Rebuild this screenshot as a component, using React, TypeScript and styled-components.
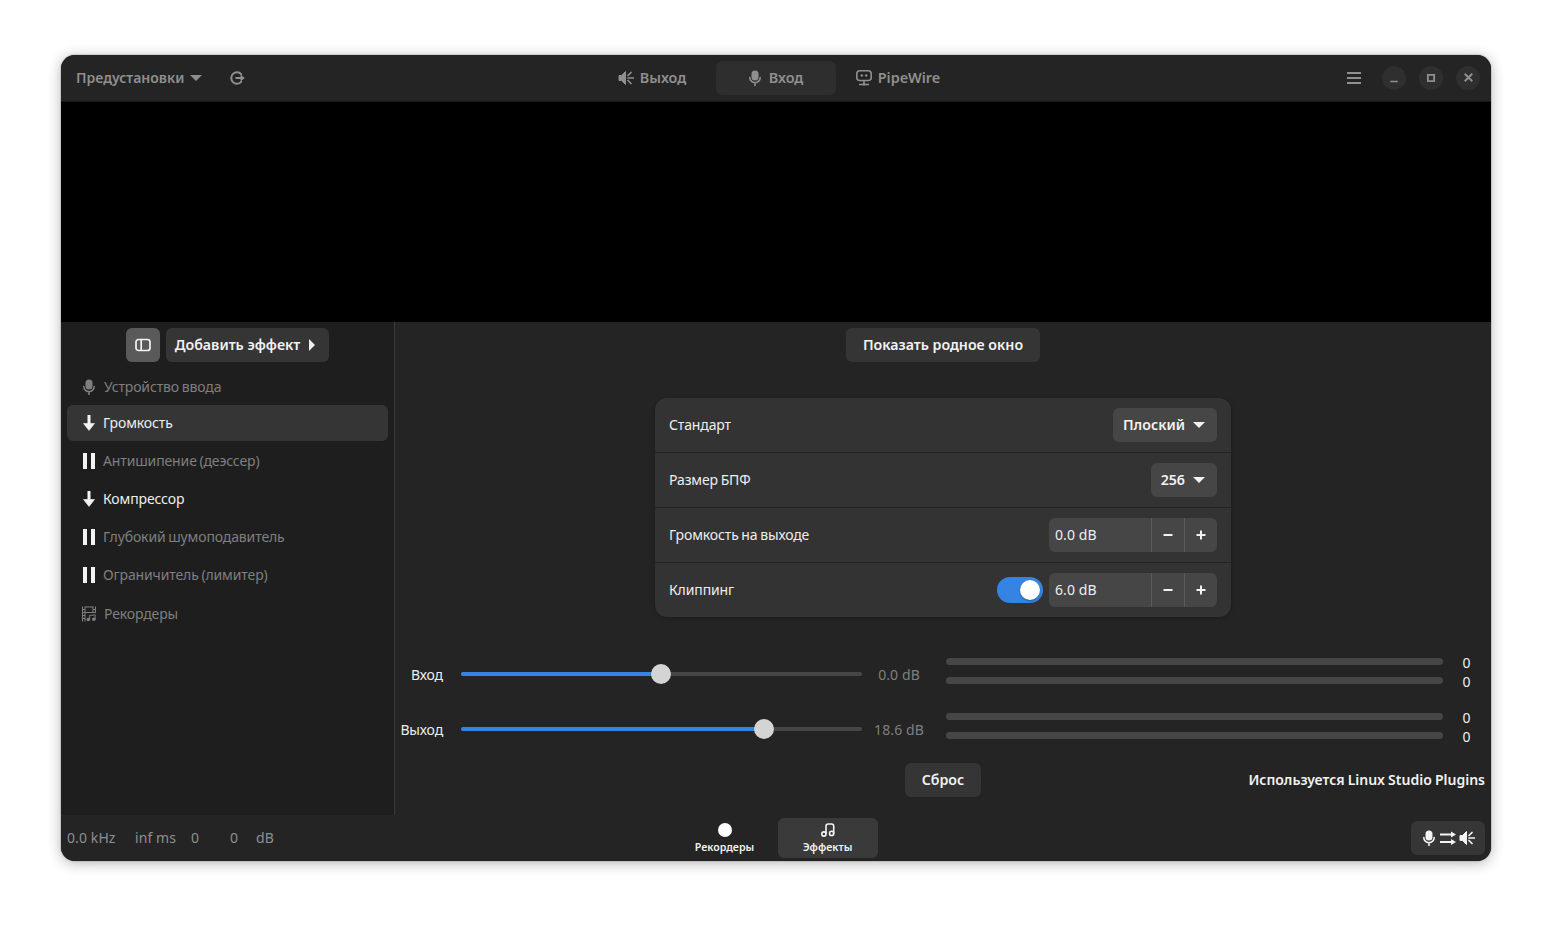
import React from 'react';
import styled, { createGlobalStyle } from 'styled-components';

const GlobalStyle = createGlobalStyle`
  html, body {
    margin: 0;
    height: 100%;
    background: #ffffff;
  }
  body {
    font-family: "Noto Sans", "Open Sans", sans-serif;
    font-size: 14px;
    line-height: 18px;
    letter-spacing: -0.13px;
    word-spacing: -0.8px;
    color: #eeeeee;
  }
  svg {
    flex: none;
  }
`;

const Page = styled.div`
  width: 1552px;
  height: 928px;
  padding: 55px 61px 67px;
  box-sizing: border-box;
  overflow: hidden;
`;

const Window = styled.div`
  height: 806px;
  display: flex;
  flex-direction: column;
  background: #242424;
  border-radius: 14px;
  overflow: hidden;
  box-shadow: 0 2px 14px rgba(0, 0, 0, 0.3), 0 0 0 1px rgba(0, 0, 0, 0.1);
`;

const HeaderBar = styled.header`
  flex: none;
  height: 47px;
  box-sizing: border-box;
  display: grid;
  grid-template-columns: 1fr auto 1fr;
  align-items: center;
  padding: 0 6px 1px;
  background: #242424;
  border-bottom: 1px solid #161616;
  color: #8f8f8f;
  font-size: 14.4px;
  font-weight: 600;
  letter-spacing: 0;
  word-spacing: 0;
`;

const HeaderLeft = styled.div`
  display: flex;
  align-items: center;
`;

const PresetMenu = styled.div`
  display: flex;
  align-items: center;
  gap: 6px;
  padding-left: 9px;
  width: 136px;
  box-sizing: border-box;
  font-size: 14px;
`;

const LoadButton = styled.span`
  display: flex;
  margin-left: 26px;
`;

const Caret = styled.span<{ $color?: string }>`
  width: 0;
  height: 0;
  border-left: 6px solid transparent;
  border-right: 6px solid transparent;
  border-top: 6px solid ${p => p.$color || '#8f8f8f'};
`;

const RightCaret = styled.span`
  width: 0;
  height: 0;
  border-top: 6px solid transparent;
  border-bottom: 6px solid transparent;
  border-left: 6px solid #eeeeee;
`;

const ViewSwitcher = styled.nav`
  display: flex;
  gap: 3px;
`;

const ViewTab = styled.div<{ $active?: boolean }>`
  width: 120px;
  height: 34px;
  box-sizing: border-box;
  padding-right: 2px;
  display: flex;
  align-items: center;
  justify-content: center;
  gap: 6px;
  border-radius: 6px;
  background: ${p => (p.$active ? '#2e2e2e' : 'transparent')};
`;

const HeaderRight = styled.div`
  display: flex;
  align-items: center;
  justify-content: flex-end;
  gap: 13px;
  padding-right: 5px;
`;

const Hamburger = styled.div`
  margin-right: 7px;
  display: flex;
`;

const WindowButton = styled.div`
  width: 24px;
  height: 24px;
  border-radius: 50%;
  background: #2f2f2f;
  display: flex;
  align-items: center;
  justify-content: center;
`;

const Spectrum = styled.div`
  flex: none;
  height: 220px;
  background: #000000;
`;

const Content = styled.div`
  flex: 1;
  min-height: 0;
  display: flex;
`;

const Sidebar = styled.aside`
  flex: none;
  width: 334px;
  box-sizing: border-box;
  background: #1e1e1e;
  border-right: 1px solid #3a3a3a;
  padding: 0 6px;
  display: flex;
  flex-direction: column;
`;

const SidebarTools = styled.div`
  display: flex;
  justify-content: center;
  gap: 6px;
  padding: 6px 0 7px;
`;

const ToggleButton = styled.div`
  width: 34px;
  height: 34px;
  border-radius: 6px;
  background: #5a5a5a;
  display: flex;
  align-items: center;
  justify-content: center;
`;

const Button = styled.div<{ $width?: number }>`
  height: 34px;
  box-sizing: border-box;
  border-radius: 6px;
  background: #353535;
  display: inline-flex;
  align-items: center;
  justify-content: center;
  gap: 9px;
  font-size: 14.2px;
  font-weight: 600;
  letter-spacing: 0;
  word-spacing: 0;
  color: #f2f2f2;
  width: ${p => (p.$width ? `${p.$width}px` : 'auto')};
`;

const AddButton = styled(Button)`
  padding-right: 5px;
`;

const EffectList = styled.div`
  display: flex;
  flex-direction: column;
  gap: 2px;
`;

const Row = styled.div<{ $selected?: boolean; $dim?: boolean; $gap?: number }>`
  height: 36px;
  display: flex;
  align-items: center;
  gap: ${p => p.$gap || 8}px;
  padding-left: 16px;
  border-radius: 6px;
  background: ${p => (p.$selected ? '#353535' : 'transparent')};
  color: ${p => (p.$dim ? '#7f7f7f' : '#eeeeee')};
`;

const RecorderRow = styled(Row)`
  margin-top: 3px;
`;

const RowIcon = styled.span`
  width: 12px;
  display: flex;
  justify-content: center;
  flex: none;
`;

const Pause = styled.span`
  width: 12px;
  height: 16px;
  box-sizing: border-box;
  border-left: 4px solid #f4f4f4;
  border-right: 4px solid #f4f4f4;
`;

const Main = styled.main`
  flex: 1;
  min-width: 0;
  display: flex;
  flex-direction: column;
  align-items: center;
  padding-top: 6px;
`;

const Card = styled.section`
  width: 576px;
  margin-top: 36px;
  border-radius: 12px;
  background: #333333;
  box-shadow: 0 1px 4px rgba(0, 0, 0, 0.25);
  overflow: hidden;
`;

const CardRow = styled.div`
  height: 54px;
  box-sizing: border-box;
  display: flex;
  align-items: center;
  justify-content: space-between;
  padding: 0 14px;
  & + & {
    height: 55px;
    border-top: 1px solid #232323;
  }
`;

const CardValue = styled.div`
  display: flex;
  align-items: center;
  gap: 6px;
`;

const Combo = styled(Button)`
  background: #464646;
  padding: 0 12px 0 10px;
  gap: 8px;
`;

const Spin = styled.div`
  width: 168px;
  height: 34px;
  border-radius: 6px;
  background: #464646;
  display: flex;
  align-items: stretch;
`;

const SpinText = styled.div`
  flex: 1;
  display: flex;
  align-items: center;
  padding-left: 6px;
  letter-spacing: 0.1px;
  word-spacing: 0;
`;

const SpinButton = styled.div`
  width: 33px;
  box-sizing: border-box;
  display: flex;
  align-items: center;
  justify-content: center;
  border-left: 1px solid #5a5a5a;
`;

const Switch = styled.div`
  width: 46px;
  height: 26px;
  box-sizing: border-box;
  border-radius: 13px;
  background: #3584e4;
  display: flex;
  justify-content: flex-end;
  align-items: center;
  padding-right: 3px;
`;

const Knob = styled.div`
  width: 20px;
  height: 20px;
  border-radius: 50%;
  background: #ffffff;
  box-shadow: 0 1px 2px rgba(0, 0, 0, 0.3);
`;

const Levels = styled.div`
  align-self: stretch;
  margin-top: 38px;
  display: flex;
  flex-direction: column;
  gap: 17px;
`;

const LevelRow = styled.div`
  height: 38px;
  display: flex;
  align-items: center;
`;

const LevelLabel = styled.div`
  width: 48px;
  margin-right: 18px;
  padding-top: 2px;
  text-align: right;
  white-space: nowrap;
`;

const Slider = styled.div`
  position: relative;
  width: 401px;
  height: 4px;
  border-radius: 2px;
  background: #464646;
`;

const SliderFill = styled.div`
  height: 100%;
  border-radius: 2px;
  background: #3584e4;
`;

const Thumb = styled.div`
  position: absolute;
  top: -8px;
  width: 20px;
  height: 20px;
  margin-left: -10px;
  border-radius: 50%;
  background: #d4d4d4;
`;

const LevelValue = styled.div`
  width: 60px;
  margin: 0 17px 0 7px;
  padding-top: 2px;
  text-align: center;
  color: #7f7f7f;
  white-space: nowrap;
  letter-spacing: 0.1px;
  word-spacing: 0;
`;

const Meters = styled.div`
  width: 497px;
  align-self: flex-start;
  margin-top: 3px;
  display: flex;
  flex-direction: column;
  gap: 12px;
`;

const Meter = styled.div`
  height: 7px;
  border-radius: 4px;
  background: #464646;
`;

const MeterNumbers = styled.div`
  width: 47px;
  align-self: flex-start;
  margin-top: -2px;
  display: flex;
  flex-direction: column;
  align-items: center;
  line-height: 19px;
`;

const Footer = styled.div`
  align-self: stretch;
  margin-top: 15px;
  padding: 0 6px;
  display: grid;
  grid-template-columns: 1fr auto 1fr;
  align-items: center;
`;

const Credit = styled.div`
  font-weight: 600;
  letter-spacing: 0;
  word-spacing: -0.5px;
  color: #f2f2f2;
  justify-self: end;
  white-space: nowrap;
`;

const BottomBar = styled.footer`
  flex: none;
  height: 46px;
  display: grid;
  grid-template-columns: 1fr auto 1fr;
  align-items: center;
  padding: 0 6px;
  background: #242424;
`;

const Stats = styled.div`
  display: flex;
  color: #8f8f8f;
  letter-spacing: 0.1px;
  word-spacing: 0;
`;

const Stat = styled.span<{ $width: number }>`
  width: ${p => p.$width}px;
  white-space: nowrap;
`;

const BottomNav = styled.nav`
  display: flex;
  gap: 3px;
`;

const NavItem = styled.div<{ $active?: boolean }>`
  width: 100px;
  height: 40px;
  border-radius: 6px;
  display: flex;
  flex-direction: column;
  align-items: center;
  justify-content: center;
  gap: 3px;
  font-size: 10.6px;
  font-weight: 600;
  line-height: 14px;
  letter-spacing: 0;
  color: #f2f2f2;
  background: ${p => (p.$active ? '#3a3a3a' : 'transparent')};
`;

const RecordDot = styled.span`
  width: 14px;
  height: 14px;
  border-radius: 50%;
  background: #ffffff;
`;

const RouteButton = styled(Button)`
  justify-self: end;
  width: 74px;
  gap: 3px;
  background: #363636;
`;

const Mic = ({ color, size = 16 }: { color: string; size?: number }) => (
  <svg width={size} height={size} viewBox="0 0 16 16" fill="none">
    <rect x="4.5" y="0.5" width="7" height="10" rx="3.5" fill={color} />
    <path d="M2.8 7.5a5.2 5.2 0 0 0 10.4 0M8 12.5V15.5" stroke={color} strokeWidth="1.6" strokeLinecap="round" />
  </svg>
);

const Speaker = ({ color }: { color: string }) => (
  <svg width="16" height="16" viewBox="0 0 16 16" fill="none">
    <path d="M7.5 1.5v13L3.5 10.5H1v-5H3.5z" fill={color} stroke={color} strokeLinejoin="round" />
    <path d="M10 5.5L13 2.5M10 8H15.5M10 10.5L13 13.5" stroke={color} strokeWidth="1.7" strokeLinecap="round" />
  </svg>
);

const PipeWireIcon = () => (
  <svg width="16" height="16" viewBox="0 0 16 16" fill="none">
    <rect x="0.8" y="0.8" width="14.4" height="9.7" rx="3" stroke="#8f8f8f" strokeWidth="1.6" />
    <circle cx="5.8" cy="5.5" r="1.2" fill="#8f8f8f" />
    <circle cx="10.2" cy="5.5" r="1.2" fill="#8f8f8f" />
    <path d="M8 10.5V14M3 14.5H13" stroke="#8f8f8f" strokeWidth="1.6" />
    <circle cx="8" cy="14.3" r="1.4" fill="#8f8f8f" />
  </svg>
);

const LoadIcon = () => (
  <svg width="16" height="16" viewBox="0 0 16 16" fill="none">
    <path d="M12.2 4.2A5.7 5.7 0 1 0 12.2 11.8" stroke="#8f8f8f" strokeWidth="2" strokeLinecap="round" />
    <path d="M6.5 8H14" stroke="#8f8f8f" strokeWidth="2" />
    <path d="M11.5 4.6L15.8 8 11.5 11.4z" fill="#8f8f8f" />
  </svg>
);

const SidebarIcon = () => (
  <svg width="16" height="16" viewBox="0 0 16 16" fill="none">
    <rect x="1" y="2.5" width="14" height="11" rx="2.5" stroke="#f4f4f4" strokeWidth="1.7" />
    <path d="M6.2 3V13" stroke="#f4f4f4" strokeWidth="1.7" />
  </svg>
);

const ArrowDown = () => (
  <svg width="12" height="16" viewBox="0 0 12 16" fill="none">
    <path d="M6 0.5V12" stroke="#f4f4f4" strokeWidth="3" strokeLinecap="round" />
    <path d="M0.5 8.5H11.5L6 15.5z" fill="#f4f4f4" stroke="#f4f4f4" strokeWidth="0.6" strokeLinejoin="round" />
  </svg>
);

const RecorderIcon = () => (
  <svg width="16" height="16" viewBox="0 0 16 16" fill="none">
    <path d="M1.5 0.5v15M14.5 0.5v6M4 0.5v15M1 3.5H4M1 6.5H4M1 9.5H4M1 12.5H4M12 0.5v6M12 3.5H15M12 6.5H15M4 1H12M4 6.5H12" stroke="#7f7f7f" strokeWidth="1" />
    <circle cx="7.3" cy="13.5" r="1.8" fill="#7f7f7f" />
    <circle cx="12.8" cy="13.2" r="1.8" fill="#7f7f7f" />
    <path d="M8.6 13.5V9.5L14.1 8.8V13.2" stroke="#7f7f7f" strokeWidth="1" />
  </svg>
);

const MusicIcon = () => (
  <svg width="14" height="14" viewBox="0 0 14 14" fill="none">
    <circle cx="2.9" cy="11" r="2.1" stroke="#f4f4f4" strokeWidth="1.6" />
    <circle cx="10.6" cy="10.4" r="2.1" stroke="#f4f4f4" strokeWidth="1.6" />
    <path d="M5 11V3.2Q5 1 7.2 1H10.5Q12.7 1 12.7 3.2V10.4" stroke="#f4f4f4" strokeWidth="1.6" />
  </svg>
);

const RouteArrows = () => (
  <svg width="16" height="16" viewBox="0 0 16 16" fill="none">
    <path d="M0 4.5H13M0 12H13" stroke="#f4f4f4" strokeWidth="2" />
    <path d="M11 1.5L16 4.5 11 7.5zM11 9L16 12 11 15z" fill="#f4f4f4" />
  </svg>
);

const Stroke = ({ d, size = 16, color = '#8f8f8f', width = 2 }: { d: string; size?: number; color?: string; width?: number }) => (
  <svg width={size} height={size} viewBox="0 0 16 16" fill="none">
    <path d={d} stroke={color} strokeWidth={width} />
  </svg>
);

const Stepper = ({ value }: { value: string }) => (
  <Spin>
    <SpinText>{value}</SpinText>
    <SpinButton><Stroke size={12} d="M2 8H14" color="#f2f2f2" width={2.6} /></SpinButton>
    <SpinButton><Stroke size={12} d="M2 8H14M8 2V14" color="#f2f2f2" width={2.6} /></SpinButton>
  </Spin>
);

const Level = ({ label, value, percent }: { label: string; value: string; percent: number }) => (
  <LevelRow>
    <LevelLabel>{label}</LevelLabel>
    <Slider>
      <SliderFill style={{ width: `${percent}%` }} />
      <Thumb style={{ left: `${percent}%` }} />
    </Slider>
    <LevelValue>{value}</LevelValue>
    <Meters>
      <Meter />
      <Meter />
    </Meters>
    <MeterNumbers>
      <span>0</span>
      <span>0</span>
    </MeterNumbers>
  </LevelRow>
);

const App = () => {
  return (
    <Page>
      <GlobalStyle />
      <Window>
        <HeaderBar>
          <HeaderLeft>
            <PresetMenu>
              Предустановки <Caret />
            </PresetMenu>
            <LoadButton><LoadIcon /></LoadButton>
          </HeaderLeft>
          <ViewSwitcher>
            <ViewTab><Speaker color="#8f8f8f" />Выход</ViewTab>
            <ViewTab $active><Mic color="#8f8f8f" />Вход</ViewTab>
            <ViewTab><PipeWireIcon />PipeWire</ViewTab>
          </ViewSwitcher>
          <HeaderRight>
            <Hamburger><Stroke d="M1 3H15M1 8H15M1 13H15" /></Hamburger>
            <WindowButton><Stroke size={12} d="M3 12.5H13" width={2} /></WindowButton>
            <WindowButton><Stroke size={10} d="M3 3H13V13H3Z" width={3} /></WindowButton>
            <WindowButton><Stroke size={11} d="M2.5 2.5L13.5 13.5M13.5 2.5L2.5 13.5" width={2.8} /></WindowButton>
          </HeaderRight>
        </HeaderBar>
        <Spectrum />
        <Content>
          <Sidebar>
            <SidebarTools>
              <ToggleButton><SidebarIcon /></ToggleButton>
              <AddButton $width={163}>Добавить эффект <RightCaret /></AddButton>
            </SidebarTools>
            <Row $dim $gap={9}><RowIcon><Mic color="#7f7f7f" /></RowIcon>Устройство ввода</Row>
            <EffectList>
              <Row $selected><RowIcon><ArrowDown /></RowIcon>Громкость</Row>
              <Row $dim><RowIcon><Pause /></RowIcon>Антишипение (деэссер)</Row>
              <Row><RowIcon><ArrowDown /></RowIcon>Компрессор</Row>
              <Row $dim><RowIcon><Pause /></RowIcon>Глубокий шумоподавитель</Row>
              <Row $dim><RowIcon><Pause /></RowIcon>Ограничитель (лимитер)</Row>
            </EffectList>
            <RecorderRow $dim $gap={9}><RowIcon><RecorderIcon /></RowIcon>Рекордеры</RecorderRow>
          </Sidebar>
          <Main>
            <Button $width={194}>Показать родное окно</Button>
            <Card>
              <CardRow>
                Стандарт
                <Combo>Плоский <Caret $color="#f2f2f2" /></Combo>
              </CardRow>
              <CardRow>
                Размер БПФ
                <Combo>256 <Caret $color="#f2f2f2" /></Combo>
              </CardRow>
              <CardRow>
                Громкость на выходе
                <Stepper value="0.0 dB" />
              </CardRow>
              <CardRow>
                Клиппинг
                <CardValue>
                  <Switch><Knob /></Switch>
                  <Stepper value="6.0 dB" />
                </CardValue>
              </CardRow>
            </Card>
            <Levels>
              <Level label="Вход" value="0.0 dB" percent={49.9} />
              <Level label="Выход" value="18.6 dB" percent={75.6} />
            </Levels>
            <Footer>
              <span />
              <Button $width={76}>Сброс</Button>
              <Credit>Используется Linux Studio Plugins</Credit>
            </Footer>
          </Main>
        </Content>
        <BottomBar>
          <Stats>
            <Stat $width={68}>0.0 kHz</Stat>
            <Stat $width={56}>inf ms</Stat>
            <Stat $width={39}>0</Stat>
            <Stat $width={26}>0</Stat>
            <Stat $width={20}>dB</Stat>
          </Stats>
          <BottomNav>
            <NavItem><RecordDot />Рекордеры</NavItem>
            <NavItem $active><MusicIcon />Эффекты</NavItem>
          </BottomNav>
          <RouteButton>
            <Mic color="#f4f4f4" />
            <RouteArrows />
            <Speaker color="#f4f4f4" />
          </RouteButton>
        </BottomBar>
      </Window>
    </Page>
  );
};

export default App;
